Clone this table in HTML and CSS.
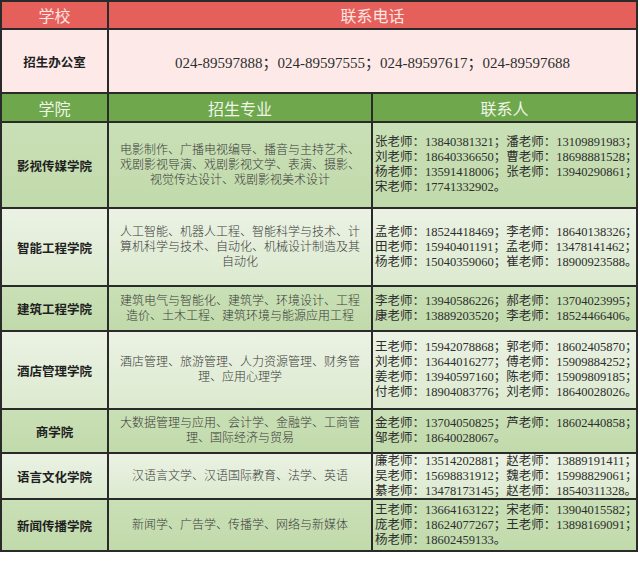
FILE: index.html
```html
<!DOCTYPE html>
<html lang="zh-CN">
<head>
<meta charset="utf-8">
<title>招生联系方式</title>
<link rel="stylesheet" href="styles.css">
</head>
<body>
<div class="sheet">
  <div class="cell head red">学校</div>
  <div class="cell head red span2">联系电话</div>

  <div class="cell name pink">招生办公室</div>
  <div class="cell phones pink span2">024-89597888；024-89597555；024-89597617；024-89597688</div>

  <div class="cell head green">学院</div>
  <div class="cell head green">招生专业</div>
  <div class="cell head green">联系人</div>

  <div class="cell name dark">影视传媒学院</div>
  <div class="cell major dark">电影制作、广播电视编导、播音与主持艺术、<br>戏剧影视导演、戏剧影视文学、表演、摄影、<br>视觉传达设计、戏剧影视美术设计</div>
  <div class="cell contact dark">张老师：13840381321；潘老师：13109891983；<br>刘老师：18640336650；曹老师：18698881528；<br>杨老师：13591418006；张老师：13940290861；<br>宋老师：17741332902。</div>

  <div class="cell name light">智能工程学院</div>
  <div class="cell major light">人工智能、机器人工程、智能科学与技术、计<br>算机科学与技术、自动化、机械设计制造及其<br>自动化</div>
  <div class="cell contact light">孟老师：18524418469；李老师：18640138326；<br>田老师：15940401191；孟老师：13478141462；<br>杨老师：15040359060；崔老师：18900923588。</div>

  <div class="cell name dark">建筑工程学院</div>
  <div class="cell major dark">建筑电气与智能化、建筑学、环境设计、工程<br>造价、土木工程、建筑环境与能源应用工程</div>
  <div class="cell contact dark">李老师：13940586226；郝老师：13704023995；<br>康老师：13889203520；李老师：18524466406。</div>

  <div class="cell name light">酒店管理学院</div>
  <div class="cell major light">酒店管理、旅游管理、人力资源管理、财务管<br>理、应用心理学</div>
  <div class="cell contact light">王老师：15942078868；郭老师：18602405870；<br>刘老师：13644016277；傅老师：15909884252；<br>姜老师：13940597160；陈老师：15909809185；<br>付老师：18904083776；刘老师：18640028026。</div>

  <div class="cell name dark">商学院</div>
  <div class="cell major dark">大数据管理与应用、会计学、金融学、工商管<br>理、国际经济与贸易</div>
  <div class="cell contact dark">金老师：13704050825；芦老师：18602440858；<br>邹老师：18640028067。</div>

  <div class="cell name light">语言文化学院</div>
  <div class="cell major light">汉语言文学、汉语国际教育、法学、英语</div>
  <div class="cell contact light">廉老师：13514202881；赵老师：13889191411；<br>吴老师：15698831912；魏老师：15998829061；<br>綦老师：13478173145；赵老师：18540311328。</div>

  <div class="cell name dark">新闻传播学院</div>
  <div class="cell major dark">新闻学、广告学、传播学、网络与新媒体</div>
  <div class="cell contact dark">王老师：13664163122；宋老师：13904015582；<br>庞老师：18624077267；王老师：13898169091；<br>杨老师：18602459133。</div>
</div>
</body>
</html>
```
FILE: styles.css
```css
html, body {
  margin: 0;
  padding: 0;
  background: #ffffff;
}

.sheet {
  display: grid;
  grid-template-columns: 107px 264px 265px;
  grid-template-rows: 28px 64px 29px 86px 78px 45px 78px 44px 46px 52px;
  width: 638px;
  border-top: 2px solid #2a2a2a;
  border-left: 2px solid #2a2a2a;
  box-sizing: border-box;
  font-family: "Noto Sans CJK SC", sans-serif;
}

.cell {
  border-right: 2px solid #2a2a2a;
  border-bottom: 2px solid #2a2a2a;
  display: flex;
  align-items: center;
  justify-content: center;
  text-align: center;
  overflow: hidden;
  white-space: nowrap;
}

.span2 {
  grid-column: span 2;
}

.head {
  font-size: 16px;
  font-weight: 400;
  line-height: 1;
}

.red {
  background: #e6605b;
  color: #fbe6e2;
}

.green {
  background: #6fa74d;
  color: #f0f6ea;
}

.pink {
  background: #fdeae8;
}

.dark {
  background: linear-gradient(180deg, #c9e0b6 0%, #c1daab 100%);
}

.light {
  background: linear-gradient(180deg, #ebf2e4 0%, #dceacf 100%);
}

.name {
  font-size: 12.5px;
  font-weight: 700;
  color: #1f1f1f;
}

.phones {
  font-family: "Liberation Serif", "Noto Sans CJK SC", serif;
  font-size: 15px;
  color: #2e2e2e;
}

.major {
  font-family: "Liberation Serif", "Noto Sans CJK SC", serif;
  font-size: 12px;
  line-height: 15px;
  color: #3a3a3a;
  font-weight: 300;
}

.contact {
  justify-content: flex-start;
  text-align: left;
  padding-left: 2px;
  font-family: "Liberation Serif", "Noto Sans CJK SC", serif;
  font-size: 12.5px;
  line-height: 15px;
  color: #2e2e2e;
}
```
